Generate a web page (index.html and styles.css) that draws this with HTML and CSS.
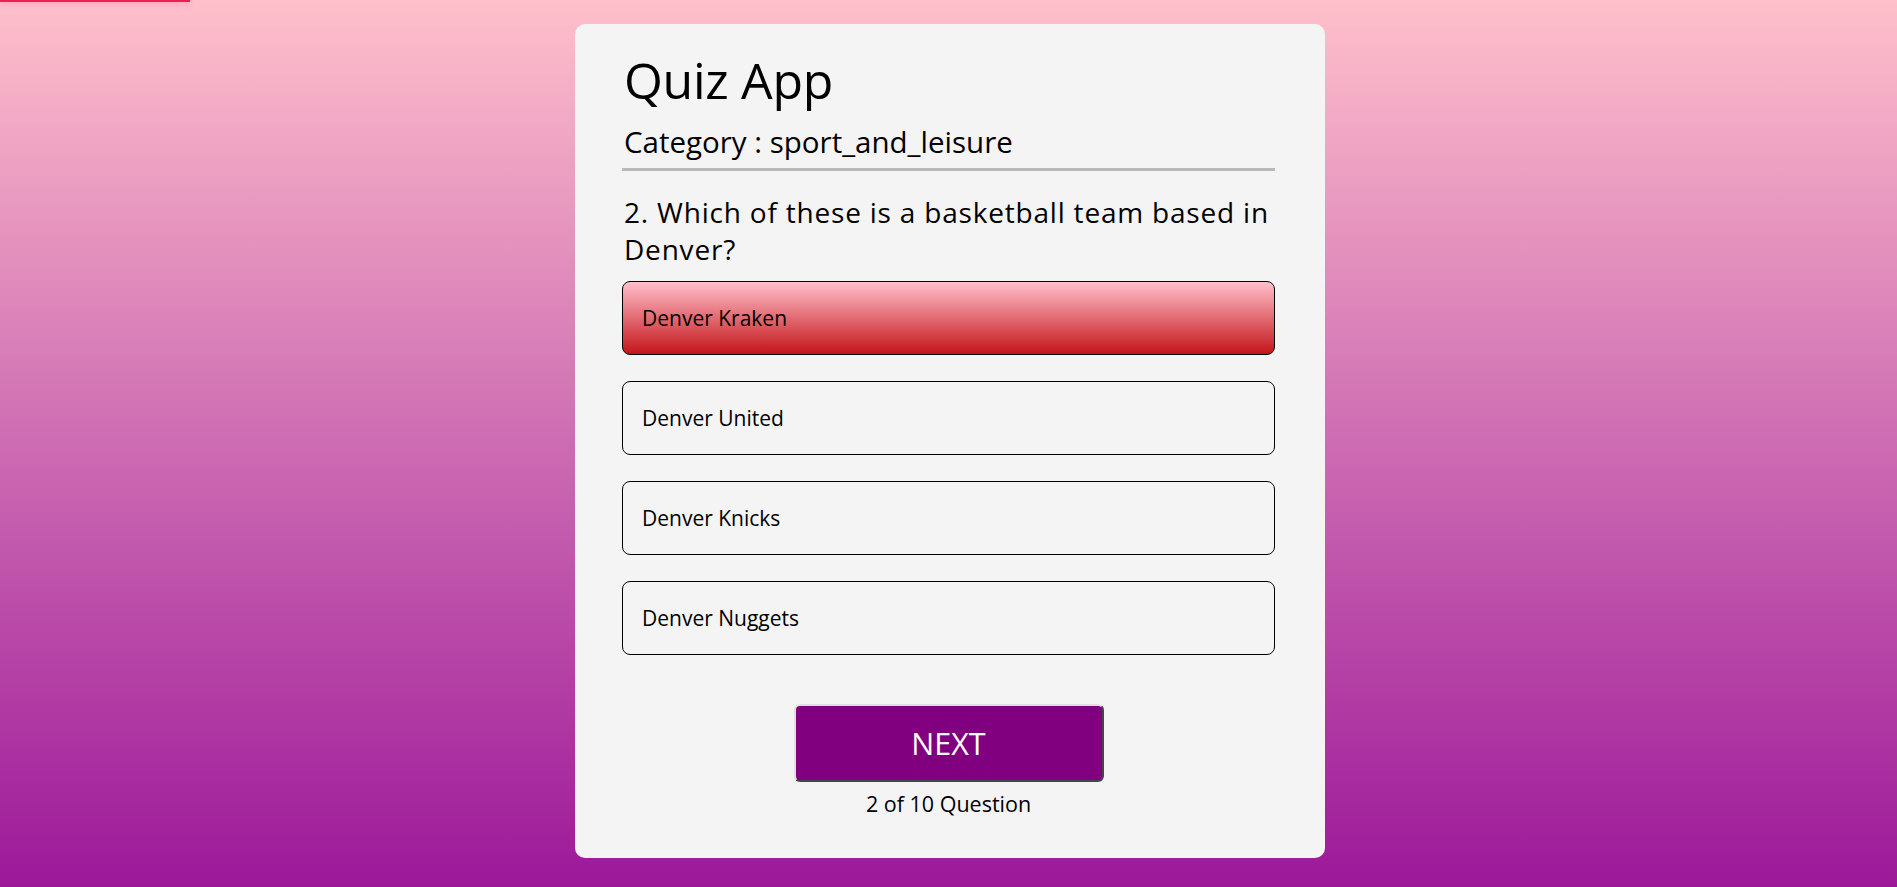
FILE: index.html
```html
<!DOCTYPE html>
<html lang="en">
<head>
<meta charset="utf-8">
<title>Quiz App</title>
<link rel="stylesheet" href="styles.css">
</head>
<body>
<div class="progress"></div>
<main class="page">
  <section class="card">
    <h1 class="title">Quiz App</h1>
    <h2 class="category">Category : sport_and_leisure</h2>
    <p class="question">2. Which of these is a basketball team based in Denver?</p>
    <div class="options">
      <button class="option wrong">Denver Kraken</button>
      <button class="option">Denver United</button>
      <button class="option">Denver Knicks</button>
      <button class="option">Denver Nuggets</button>
    </div>
    <div class="footer">
      <button class="next">NEXT</button>
      <p class="count">2 of 10 Question</p>
    </div>
  </section>
</main>
</body>
</html>
```

FILE: styles.css
```css
* { box-sizing: border-box; }
html, body { margin: 0; padding: 0; }
body {
  min-height: 100vh;
  background: linear-gradient(to bottom, #ffc0cb 0%, #9c1899 100%);
  font-family: "Open Sans", "Noto Sans", sans-serif;
  color: #000;
  position: relative;
}
.progress {
  position: absolute;
  top: 0;
  left: 0;
  width: 190px;
  height: 2px;
  background: #ee1d52;
  box-shadow: 0 1px 6px rgba(238, 29, 82, 0.35);
}
.page {
  display: flex;
  justify-content: center;
  padding-top: 24px;
  padding-bottom: 29px;
  padding-left: 3px;
}
.card {
  width: 750px;
  height: 834px;
  background: #f4f4f4;
  border-radius: 10px;
  padding: 0 50px 0 47px;
  display: flex;
  flex-direction: column;
}
.title {
  font-weight: 400;
  font-size: 50px;
  line-height: 60px;
  margin: 26px 0 0 2px;
  letter-spacing: -0.3px;
}
.category {
  font-weight: 400;
  font-size: 29.5px;
  line-height: 36px;
  margin: 14px 0 0 0;
  padding: 0 0 8px 2px;
  border-bottom: 3px solid #b9b9b9;
}
.question {
  font-size: 28px;
  line-height: 37px;
  letter-spacing: 0.8px;
  margin: 23px 0 0 2px;
}
.options {
  display: flex;
  flex-direction: column;
  gap: 26px;
  margin-top: 13px;
}
.option {
  height: 74px;
  border: 1px solid #000;
  border-radius: 8px;
  background: #f4f4f4;
  text-align: left;
  padding: 0 0 0 19px;
  font-family: inherit;
  font-size: 21px;
  color: #000;
}
.option.wrong {
  background: linear-gradient(to bottom, #ffc0cb 0%, #c4151a 100%);
}
.footer {
  display: flex;
  flex-direction: column;
  align-items: center;
  margin-top: 49px;
}
.next {
  width: 310px;
  height: 78px;
  background: #800080;
  color: #fff;
  border: 2px outset #e0e0e0;
  border-right-color: #9a9a9a;
  border-bottom-color: #9a9a9a;
  border-radius: 6px;
  font-family: inherit;
  font-size: 30.5px;
}
.count {
  margin: 8px 0 0 0;
  font-size: 21.5px;
  line-height: 28px;
}
```
